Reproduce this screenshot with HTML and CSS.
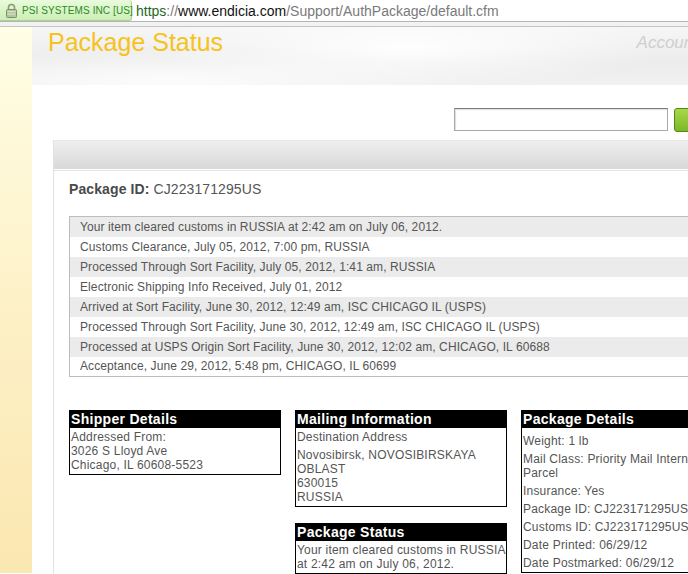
FILE: index.html
```html
<!DOCTYPE html>
<html lang="en">
<head>
    <meta charset="UTF-8">
    <title>Package Status</title>
    <link rel="stylesheet" href="styles.css">
</head>
<body>
    <div class="urlbar">
        <span class="identity">
            <svg class="lock" width="13" height="15" viewBox="0 0 13 15">
                <path d="M3.5 7V4.5a3 3 0 0 1 6 0V7" fill="none" stroke="#8a9a7a" stroke-width="1.6"/>
                <rect x="1.5" y="6.5" width="10" height="8" rx="1" fill="#b4c49c" stroke="#7f8f6c"/>
                <rect x="2.5" y="8" width="8" height="1.2" fill="#d6e2c4"/>
                <rect x="2.5" y="10.5" width="8" height="1.2" fill="#d6e2c4"/>
            </svg>
            PSI SYSTEMS INC [US]
        </span>
        <span class="url"><span class="scheme">https</span><span class="dim">://</span>www.endicia.com<span class="dim">/Support/AuthPackage/default.cfm</span></span>
    </div>
    <div class="chrome-edge"></div>

    <div class="frame">
        <div class="sidebar"></div>
        <div class="page">
            <div class="masthead">
                <h1>Package Status</h1>
                <span class="account">Account</span>
            </div>

            <div class="searchrow">
                <input type="text" class="search">
                <button class="go"></button>
            </div>

            <div class="panel">
                <div class="panel-head"></div>
                <div class="panel-body">
                    <p class="pkgid"><b>Package ID:</b> CJ223171295US</p>

                    <table class="events">
                        <tr><td>Your item cleared customs in RUSSIA at 2:42 am on July 06, 2012.</td></tr>
                        <tr><td>Customs Clearance, July 05, 2012, 7:00 pm, RUSSIA</td></tr>
                        <tr><td>Processed Through Sort Facility, July 05, 2012, 1:41 am, RUSSIA</td></tr>
                        <tr><td>Electronic Shipping Info Received, July 01, 2012</td></tr>
                        <tr><td>Arrived at Sort Facility, June 30, 2012, 12:49 am, ISC CHICAGO IL (USPS)</td></tr>
                        <tr><td>Processed Through Sort Facility, June 30, 2012, 12:49 am, ISC CHICAGO IL (USPS)</td></tr>
                        <tr><td>Processed at USPS Origin Sort Facility, June 30, 2012, 12:02 am, CHICAGO, IL 60688</td></tr>
                        <tr><td>Acceptance, June 29, 2012, 5:48 pm, CHICAGO, IL 60699</td></tr>
                    </table>

                    <div class="boxes">
                        <div class="col">
                            <div class="box">
                                <div class="box-title">Shipper Details</div>
                                <div class="box-body">
                                    Addressed From:<br>
                                    3026 S Lloyd Ave<br>
                                    Chicago, IL 60608-5523
                                </div>
                            </div>
                        </div>
                        <div class="col">
                            <div class="box">
                                <div class="box-title">Mailing Information</div>
                                <div class="box-body">
                                    Destination Address
                                    <div class="addr">
                                        Novosibirsk, NOVOSIBIRSKAYA<br>
                                        OBLAST<br>
                                        630015<br>
                                        RUSSIA
                                    </div>
                                </div>
                            </div>
                            <div class="box">
                                <div class="box-title">Package Status</div>
                                <div class="box-body">
                                    Your item cleared customs in RUSSIA at 2:42 am on July 06, 2012.
                                </div>
                            </div>
                        </div>
                        <div class="col">
                            <div class="box">
                                <div class="box-title">Package Details</div>
                                <div class="box-body details">
                                    <p>Weight: 1 lb</p>
                                    <p>Mail Class: Priority Mail International Parcel</p>
                                    <p>Insurance: Yes</p>
                                    <p>Package ID: CJ223171295US</p>
                                    <p>Customs ID: CJ223171295US</p>
                                    <p>Date Printed: 06/29/12</p>
                                    <p>Date Postmarked: 06/29/12</p>
                                </div>
                            </div>
                        </div>
                    </div>
                </div>
            </div>
        </div>
    </div>
</body>
</html>
```

FILE: styles.css
```css
*{
    margin: 0;
    padding: 0;
    box-sizing: border-box;
}
body{
    width: 688px;
    height: 574px;
    overflow: hidden;
    background-color: white;
    font-family: "Liberation Sans", Arial, sans-serif;
}

/* browser address bar */
.urlbar{
    height: 22px;
    display: flex;
    align-items: center;
    gap: 4px;
    background-color: white;
    border-bottom: 1px solid #b4b4b4;
    white-space: nowrap;
}
.identity{
    height: 21px;
    width: 132px;
    display: flex;
    align-items: center;
    gap: 4px;
    padding-left: 5px;
    font-size: 10px;
    letter-spacing: 0.1px;
    color: #2b8a1f;
    background: linear-gradient(#e9fbdc, #cdeeb6);
    border: 1px solid #a8d48e;
    border-left: none;
    border-top: none;
    border-radius: 0 3px 3px 0;
}
.lock{
    flex-shrink: 0;
}
.url{
    font-size: 14px;
    color: #111;
}
.scheme{
    color: #1e6a1e;
}
.dim{
    color: #7a7a7a;
}
.chrome-edge{
    height: 5px;
    background-color: #f2f2f2;
    border-bottom: 1px solid #c4c4c4;
}

/* page frame */
.frame{
    display: flex;
    height: 546px;
}
.sidebar{
    width: 32px;
    flex-shrink: 0;
    background: linear-gradient(#fffee6, #fdf1c8 50%, #fbe7b0);
}
.page{
    width: 680px;
    flex-shrink: 0;
}
.masthead{
    height: 58px;
    display: flex;
    align-items: flex-start;
    padding: 1px 14px 0 16px;
    background:
        radial-gradient(ellipse 260px 40px at 55% 35%, rgba(255,255,255,0.95), rgba(255,255,255,0)),
        radial-gradient(ellipse 300px 30px at 20% 90%, rgba(255,255,255,0.8), rgba(255,255,255,0)),
        linear-gradient(#f6f6f6, #ececec 60%, #f1f1f1);
}
.masthead h1{
    font-size: 25px;
    line-height: 28px;
    font-weight: normal;
    color: #f6c21c;
}
.account{
    margin-left: auto;
    margin-top: 5px;
    font-size: 17px;
    font-style: italic;
    color: #cfcfcf;
}

.searchrow{
    display: flex;
    gap: 6px;
    padding: 23px 0 8px 422px;
}
.search{
    width: 214px;
    height: 23px;
    border: 1px solid #a9a9a9;
    border-top-color: #7c7c7c;
    box-shadow: inset 1px 1px 1px #ddd;
    background-color: white;
}
.go{
    width: 30px;
    height: 24px;
    border: 1px solid #4f8a12;
    border-radius: 3px;
    background: linear-gradient(#a8d84a, #7cb82a);
}

/* status panel */
.panel{
    width: 700px;
    margin-left: 21px;
    border-left: 1px solid #e2e2e2;
}
.panel-head{
    height: 30px;
    background: linear-gradient(#efefef, #d8d8d8) no-repeat;
    background-size: 100% 28px;
    border-top: 1px solid #e8e8e8;
}
.panel-body{
    border-top: 1px solid #e4e4e4;
    padding: 10px 0 0 15px;
    height: 420px;
}
.pkgid{
    font-size: 14px;
    line-height: 16px;
    letter-spacing: 0.1px;
    color: #555;
}
.pkgid b{
    color: #4a4a4a;
}

.events{
    margin-top: 19px;
    width: 690px;
    border-collapse: collapse;
    border: 1px solid #bcbcbc;
}
.events td{
    height: 20px;
    padding: 0 10px;
    font-size: 12px;
    letter-spacing: 0.1px;
    color: #555;
    white-space: nowrap;
}
.events tr:nth-child(odd){
    background-color: #ebebeb;
}

.boxes{
    margin-top: 33px;
    display: grid;
    grid-template-columns: 212px 212px 212px;
    column-gap: 14px;
    align-items: start;
}
.col{
    display: flex;
    flex-direction: column;
    gap: 16px;
}
.box{
    border: 1px solid black;
}
.box-title{
    height: 17px;
    line-height: 17px;
    padding-left: 1px;
    background-color: black;
    color: white;
    font-size: 14px;
    font-weight: bold;
    letter-spacing: 0.3px;
    white-space: nowrap;
}
.box-body{
    padding: 2px 1px 2px 1px;
    font-size: 12px;
    line-height: 14px;
    letter-spacing: 0.2px;
    color: #555;
}
.addr{
    margin-top: 4px;
}
.details p{
    margin-top: 4px;
}
```
